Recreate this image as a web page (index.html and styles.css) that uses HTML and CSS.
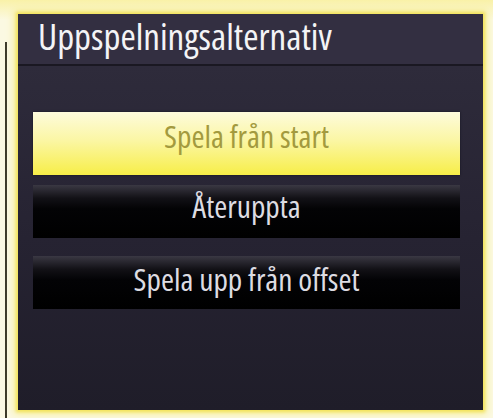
FILE: index.html
```html
<!DOCTYPE html>
<html lang="sv">
<head>
<meta charset="utf-8">
<title>Uppspelningsalternativ</title>
<link rel="stylesheet" href="styles.css">
</head>
<body>
<div class="screen">
  <div class="rule"></div>
  <div class="panel">
    <div class="header"><h1 class="title">Uppspelningsalternativ</h1></div>
    <div class="body">
      <div class="btn btn-active">Spela från start</div>
      <div class="btn btn-dark btn-first">Återuppta</div>
      <div class="btn btn-dark btn-second">Spela upp från offset</div>
    </div>
  </div>
</div>
</body>
</html>
```
FILE: styles.css
```css
html, body {
  margin: 0;
  padding: 0;
}
body {
  width: 493px;
  height: 418px;
  overflow: hidden;
  background: #fbf9e4;
  font-family: "Open Sans", "DejaVu Sans", sans-serif;
  font-stretch: 75%;
}
.screen {
  display: flex;
  align-items: flex-start;
  height: 418px;
  background: linear-gradient(to bottom, #f9f1a8 0px, #fbf9e2 20px, #fbf9e4 100%);
}
.rule {
  width: 2px;
  height: 376px;
  margin-top: 42px;
  margin-left: 5px;
  background: #3a3828;
}
.panel {
  margin-top: 14px;
  margin-left: 11px;
  width: 465px;
  height: 396px;
  display: flex;
  flex-direction: column;
  box-shadow: 0 0 3px 2px #f2e35a, 0 0 8px 4px #f6ee9a;
  background: #24212f;
}
.header {
  height: 52px;
  background: #332f41;
  border-bottom: 2px solid #1a1822;
  box-sizing: border-box;
  flex: none;
}
.title {
  margin: 0;
  padding: 2px 0 0 20px;
  font-size: 37px;
  line-height: 40px;
  font-weight: 500;
  color: #f4f4f6;
  white-space: nowrap;
}
.body {
  flex: 1;
  padding: 46px 23px 0 15px;
  background: linear-gradient(to bottom, #2e2b3b 0%, #262332 50%, #1f1d29 100%);
}
.btn {
  display: flex;
  align-items: center;
  justify-content: center;
  box-sizing: border-box;
  font-size: 31.5px;
  font-weight: 500;
  white-space: nowrap;
}
.btn-active {
  height: 63px;
  padding-bottom: 17px;
  color: #a39a3e;
  background: linear-gradient(to bottom, #fdfbdc 0%, #fbf6a4 45%, #f7ee48 100%);
  box-shadow: 0 0 2px #151320;
}
.btn-dark {
  height: 53px;
  color: #dddce2;
  background: linear-gradient(to bottom, #3a3843 0%, #121116 25%, #030305 45%, #000 100%);
}
.btn-first {
  margin-top: 10px;
  padding-bottom: 12px;
}
.btn-second {
  margin-top: 18px;
  padding-bottom: 8px;
}
```
